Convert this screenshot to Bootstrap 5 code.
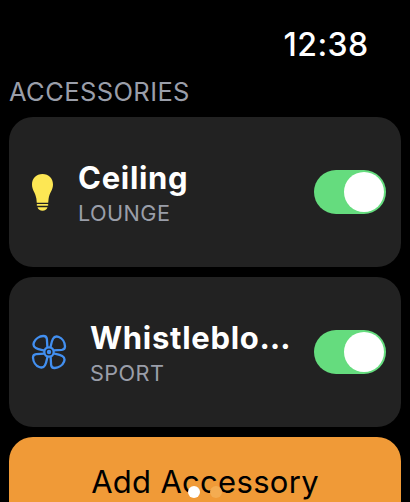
<!DOCTYPE html>
<html lang="en" data-bs-theme="dark">
<head>
<meta charset="utf-8">
<meta name="viewport" content="width=device-width, initial-scale=1">
<title>Accessories</title>
<link href="https://cdn.jsdelivr.net/npm/bootstrap@5.3.0/dist/css/bootstrap.min.css" rel="stylesheet">
<style>
  body { width: 410px; height: 502px; background: #000; font-family: Inter, Roboto, sans-serif; }
  .clock { height: 75px; padding: 25px 41.5px 0 0; font-size: 32px; line-height: 40px; font-weight: 550; letter-spacing: .4px; }
  .heading { height: 42px; padding-left: 9px; font-size: 25.5px; line-height: 34px; font-weight: 400; letter-spacing: .4px; color: #9a9ea9; }
  .tiles { gap: 10px; padding: 0 9px; }
  .tile { height: 150px; border-radius: 24px; background: #222; padding: 0 15px 0 22px; }
  .title { font-size: 31px; line-height: 38px; font-weight: 700; letter-spacing: .7px; }
  .room { font-size: 21.7px; line-height: 32px; letter-spacing: .4px; color: #9a9ea9; }
  .name-block { padding-top: 3px; }
  .bulb { width: 24px; height: 38px; margin-right: 23px; }
  .fan { width: 36px; height: 36px; margin-right: 23px; }
  .toggle { width: 72px; height: 44px; padding: 2px; border-radius: 22px; background: #65dc7e; margin-left: 20px; }
  .knob { width: 40px; height: 40px; background: #fff; }
  .add { height: 90px; border-radius: 24px; background: #f09a37; color: #000; font-size: 31px; line-height: 90px; letter-spacing: .3px; }
  .pager { left: 188px; top: 486px; gap: 10px; }
  .pager span { width: 12px; height: 12px; background: #fff; }
  .pager span + span { background: #f4ac51; }
</style>
</head>
<body class="overflow-hidden position-relative text-white">
  <header class="clock text-end">12:38</header>
  <h1 class="heading m-0">ACCESSORIES</h1>
  <main class="tiles d-flex flex-column">
    <section class="tile d-flex align-items-center flex-shrink-0">
      <svg class="bulb flex-shrink-0" viewBox="0 0 24 38" fill="#fde754" aria-hidden="true">
        <path d="M11.5 1C5.2 1 1 5.5 1 11.4c0 5.600 3.600 8.200 4.400 14.400.2 1.800.2 3.100.4 4h11.400c.2-.9.2-2.200.4-4 .8-6.200 4.400-8.800 4.400-14.400C22 5.500 17.800 1 11.500 1z"/>
        <rect x="5.700" y="31.100" width="11.600" height="1.700" rx=".8"/>
        <path d="M6.500 34.200h10c-.6 2.100-2.500 3.600-5 3.600s-4.400-1.500-5-3.600z"/>
      </svg>
      <div class="name-block flex-grow-1">
        <div class="title">Ceiling</div>
        <div class="room">LOUNGE</div>
      </div>
      <div class="toggle d-flex justify-content-end flex-shrink-0" role="switch" aria-checked="true" aria-label="Ceiling"><span class="knob rounded-circle"></span></div>
    </section>
    <section class="tile d-flex align-items-center flex-shrink-0">
      <svg class="fan flex-shrink-0" viewBox="-18 -18 36 36" fill="none" stroke="#428ff0" stroke-width="2.300" stroke-linejoin="round" aria-hidden="true">
        <defs><path id="blade" d="M1.500-4.500C2.200-7.500 2.500-10.500 4-13.200C5.200-15.400 7.300-16 9.800-15C13.300-13.600 15.800-9.500 16-5.800C16.100-3.600 15-2.300 12.800-2.100L4.500-1.600"/></defs>
        <use href="#blade"/><use href="#blade" transform="rotate(90)"/><use href="#blade" transform="rotate(180)"/><use href="#blade" transform="rotate(270)"/>
        <circle r="4.700"/><circle r="2.200" fill="#428ff0" stroke="none"/>
      </svg>
      <div class="name-block flex-grow-1">
        <div class="title text-nowrap">Whistleblo…</div>
        <div class="room">SPORT</div>
      </div>
      <div class="toggle d-flex justify-content-end flex-shrink-0" role="switch" aria-checked="true" aria-label="Whistleblower"><span class="knob rounded-circle"></span></div>
    </section>
    <button type="button" class="add border-0 p-0 w-100 flex-shrink-0">Add Accessory</button>
  </main>
  <div class="pager position-absolute d-flex"><span class="rounded-circle"></span><span class="rounded-circle"></span></div>
<script src="https://cdn.jsdelivr.net/npm/bootstrap@5.3.0/dist/js/bootstrap.bundle.min.js"></script>
</body>
</html>
